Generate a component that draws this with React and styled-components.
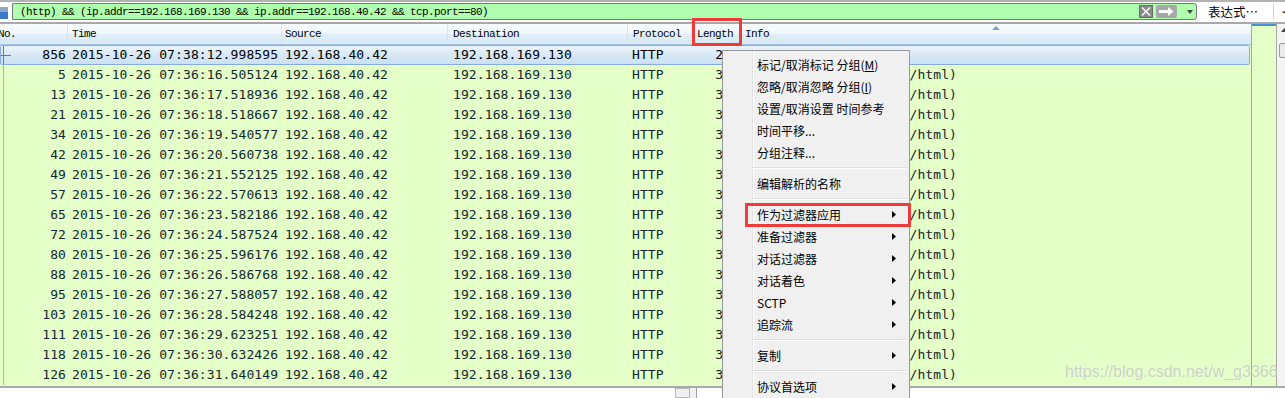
import React from 'react';
import styled, { createGlobalStyle } from 'styled-components';

const Global = createGlobalStyle`
  html, body { margin: 0; padding: 0; background: #fff; }
  body { overflow: hidden; font-family: "Noto Sans CJK SC", "Liberation Sans", sans-serif; }
`;

const COLS = [
  { key: 'no', w: 68, align: 'right', pad: '0 2px 0 0', hpad: '0', indent: -2 },
  { key: 'time', w: 214, align: 'left', pad: '0 0 0 4px', hpad: '0 0 0 4px' },
  { key: 'src', w: 166, align: 'left', pad: '0 0 0 3px', hpad: '0 0 0 3px' },
  { key: 'dst', w: 180, align: 'left', pad: '0 0 0 5px', hpad: '0 0 0 5px' },
  { key: 'proto', w: 64, align: 'left', pad: '0 0 0 4px', hpad: '0 0 0 5px' },
  { key: 'len', w: 49, align: 'right', pad: '0 2px 0 0', hpad: '0 0 0 5px' },
  { key: 'info', w: 0, align: 'left', pad: '0 0 0 2px', hpad: '0 0 0 4px' },
];

const HEAD = { no: 'No.', time: 'Time', src: 'Source', dst: 'Destination', proto: 'Protocol', len: 'Length', info: 'Info' };

const RAW = [
  ['856', '07:38:12.998595', '284'],
  ['5', '07:36:16.505124', '372'],
  ['13', '07:36:17.518936', '372'],
  ['21', '07:36:18.518667', '372'],
  ['34', '07:36:19.540577', '372'],
  ['42', '07:36:20.560738', '372'],
  ['49', '07:36:21.552125', '372'],
  ['57', '07:36:22.570613', '372'],
  ['65', '07:36:23.582186', '372'],
  ['72', '07:36:24.587524', '372'],
  ['80', '07:36:25.596176', '372'],
  ['88', '07:36:26.586768', '372'],
  ['95', '07:36:27.588057', '372'],
  ['103', '07:36:28.584248', '372'],
  ['111', '07:36:29.623251', '372'],
  ['118', '07:36:30.632426', '372'],
  ['126', '07:36:31.640149', '372'],
];

const ROWS = RAW.map(([no, t, len], i) => ({
  no,
  time: `2015-10-26 ${t}`,
  src: '192.168.40.42',
  dst: '192.168.169.130',
  proto: 'HTTP',
  len,
  info: i === 0 ? 'GET / HTTP/1.1' : 'HTTP/1.1 200 OK  (text/html)',
  selected: i === 0,
}));

const MENU = [
  { label: '标记/取消标记 分组(', mn: 'M', tail: ')' },
  { label: '忽略/取消忽略 分组(', mn: 'I', tail: ')' },
  { label: '设置/取消设置 时间参考' },
  { label: '时间平移...' },
  { label: '分组注释...' },
  { sep: true },
  { label: '编辑解析的名称' },
  { sep: true },
  { label: '作为过滤器应用', sub: true },
  { label: '准备过滤器', sub: true },
  { label: '对话过滤器', sub: true },
  { label: '对话着色', sub: true },
  { label: 'SCTP', sub: true },
  { label: '追踪流', sub: true },
  { sep: true },
  { label: '复制', sub: true },
  { sep: true },
  { label: '协议首选项', sub: true },
];

const Frame = styled.div`
  position: relative;
  width: 1285px;
  height: 398px;
  overflow: hidden;
  background: #fff;
  display: flex;
  flex-direction: column;
`;

/* ---------- filter toolbar ---------- */
const FilterBar = styled.div`
  height: 22px;
  flex: 0 0 22px;
  box-sizing: border-box;
  border-top: 2px solid #b2b2b2;
  display: flex;
  align-items: flex-start;
  padding-top: 1px;
  background: #fff;
  & > * { flex-shrink: 0; }
`;

const BookmarkIcon = styled.svg`
  flex: 0 0 9px;
  margin-top: 4px;
`;

const FilterInput = styled.div`
  margin-left: 3px;
  flex: 0 0 1185px;
  width: 1185px;
  height: 17px;
  box-sizing: border-box;
  border: 1px solid #7a7a7a;
  border-radius: 0 3px 3px 0;
  background: #afffaf;
  display: flex;
  align-items: center;
`;

const FilterText = styled.div`
  flex: 1;
  padding-left: 7px;
  font-family: "Liberation Mono", monospace;
  font-size: 11px;
  letter-spacing: -0.6px;
  color: #000;
  white-space: nowrap;
  overflow: hidden;
`;

const ClearButton = styled.div`
  flex: 0 0 14px;
  width: 14px;
  height: 13px;
  background: #8a8a8a;
  border: 1px solid #6d6d6d;
  box-sizing: border-box;
  display: flex;
  align-items: center;
  justify-content: center;
  margin-right: 3px;
`;

const ApplyButton = styled.div`
  flex: 0 0 21px;
  width: 21px;
  height: 13px;
  background: #a8a8a8;
  border-radius: 2px;
  display: flex;
  align-items: center;
  justify-content: center;
  margin-right: 10px;
`;

const Caret = styled.svg`
  flex: 0 0 6px;
  margin-right: 3px;
`;

const ExprLabel = styled.div`
  margin-left: 11px;
  margin-top: 1px;
  font-size: 12.5px;
  line-height: 16px;
  color: #000;
  white-space: nowrap;
`;

const ToolSep = styled.div`
  width: 1px;
  height: 15px;
  margin: 1px 0 0 15px;
  background: #d0d0d0;
`;

const PlusLabel = styled.div`
  margin-left: 8px;
  font-family: "Liberation Sans", sans-serif;
  font-weight: bold;
  font-size: 15px;
  line-height: 17px;
  color: #333;
`;

/* ---------- packet list ---------- */
const Main = styled.div`
  flex: 0 0 364px;
  height: 364px;
  box-sizing: border-box;
  border-top: 2px solid #a9a9a9;
  display: flex;
  background: #e4ffc7;
`;

const List = styled.div`
  width: 1251px;
  flex: 0 0 1251px;
  display: flex;
  flex-direction: column;
  overflow: hidden;
`;

const Header = styled.div`
  height: 21px;
  flex: 0 0 21px;
  box-sizing: border-box;
  display: flex;
  border-bottom: 1px solid #a3c7e3;
  background: linear-gradient(#f8fbfe 0%, #eff7fc 48%, #e1eef8 52%, #d7e9f5 100%);
`;

const HeadCell = styled.div`
  position: relative;
  box-sizing: border-box;
  ${(p) => (p.$w ? `flex: 0 0 ${p.$w}px; width: ${p.$w}px;` : 'flex: 1;')}
  padding: ${(p) => p.$pad};
  text-indent: ${(p) => p.$indent || 0}px;
  border-right: ${(p) => (p.$w ? '1px solid #dbe4ec' : 'none')};
  font-family: "Liberation Mono", monospace;
  font-size: 11px;
  letter-spacing: -0.6px;
  line-height: 21px;
  color: #000;
  white-space: nowrap;
  overflow: hidden;
`;

const SortArrow = styled.svg`
  position: absolute;
  top: 2px;
  left: 50%;
  margin-left: -4px;
`;

const Row = styled.div`
  height: 20px;
  flex: 0 0 20px;
  display: flex;
  align-items: center;
  margin-right: ${(p) => (p.$selected ? 1 : 0)}px;
  border-radius: ${(p) => (p.$selected ? 2 : 0)}px;
  font-family: "DejaVu Sans Mono", monospace;
  font-size: 13px;
  letter-spacing: 0.1px;
  color: ${(p) => (p.$selected ? '#000' : '#12272e')};
  background: ${(p) =>
    p.$selected
      ? 'linear-gradient(#777,#777) 0 10px / 11px 1px no-repeat, linear-gradient(#777,#777) 3px 0 / 1px 20px no-repeat, linear-gradient(#eef5fc, #d6e7f6 55%, #c9dff3)'
      : 'linear-gradient(#b0b0b0,#b0b0b0) 3px 0 / 1px 100% no-repeat, #e4ffc7'};
  box-shadow: ${(p) => (p.$selected ? 'inset 0 0 0 1px #84acdd' : 'none')};
`;

const Cell = styled.div`
  box-sizing: border-box;
  ${(p) => (p.$w ? `flex: 0 0 ${p.$w}px; width: ${p.$w}px;` : 'flex: 1;')}
  padding: ${(p) => p.$pad};
  text-align: ${(p) => p.$align};
  white-space: nowrap;
  overflow: hidden;
  line-height: 20px;
`;

const MiniMap = styled.div`
  flex: 0 0 24px;
  width: 24px;
  border-left: 1px solid #a5a5a5;
  border-right: 1px solid #a5a5a5;
  background: #e4ffc7;
`;

const MapMarker = styled.div`
  height: 2px;
  background: #4a90d9;
`;

const ScrollBar = styled.div`
  flex: 1;
  background: #f4f4f4;
  display: flex;
  flex-direction: column;
  align-items: flex-start;
`;

const ScrollArrow = styled.svg`
  margin: 4px 0 0 4px;
`;

const ScrollThumb = styled.div`
  width: 10px;
  height: 15px;
  margin: 11px 0 0 2px;
  box-sizing: border-box;
  border: 1px solid #9a9a9a;
  border-radius: 2px;
  background: #ebebeb;
`;

/* ---------- bottom panes ---------- */
const Bottom = styled.div`
  flex: 1;
  box-sizing: border-box;
  border-top: 2px solid #a9a9a9;
  display: flex;
  background: #f0f0f0;
  overflow: hidden;
`;

const DetailPane = styled.div`
  flex: 0 0 675px;
  background: #fff;
  overflow: hidden;
  font-family: "DejaVu Sans Mono", monospace;
  font-size: 13px;
  color: #000;
  white-space: nowrap;
  padding: 8px 0 0 40px;
  box-sizing: border-box;
  line-height: 16px;
`;

const ScrollCorner = styled.div`
  flex: 0 0 15px;
  box-sizing: border-box;
  border: 1px solid #b8b8b8;
  background: #f0f0f0;
  margin-right: 6px;
`;

const BytesPane = styled.div`
  flex: 1;
  background: #fff;
  border-left: 1px solid #a0a0a0;
  overflow: hidden;
  font-family: "DejaVu Sans Mono", monospace;
  font-size: 13px;
  color: #000;
  white-space: nowrap;
  padding: 8px 0 0 6px;
  line-height: 16px;
`;

/* ---------- overlays ---------- */
const Watermark = styled.div`
  position: absolute;
  left: 1065px;
  top: 363px;
  font-family: "Liberation Sans", Arial, sans-serif;
  font-size: 16px;
  color: rgba(170, 170, 170, 0.55);
  text-shadow: 0 0 1px rgba(255, 255, 255, 0.8);
  white-space: nowrap;
  pointer-events: none;
`;

const Menu = styled.div`
  position: absolute;
  left: 722px;
  top: 50px;
  width: 188px;
  height: 370px;
  box-sizing: border-box;
  border: 1px solid #979797;
  padding: 2px;
  background: linear-gradient(to right, transparent 29px, #e2e3e3 29px, #e2e3e3 30px, #ffffff 30px, #ffffff 31px, transparent 31px), #f0f0f0;
  display: flex;
  flex-direction: column;
`;

const MenuItem = styled.div`
  height: 22px;
  flex: 0 0 22px;
  display: flex;
  align-items: center;
  justify-content: space-between;
  padding: 0 11px 0 32px;
  font-size: 12px;
  color: #000;
  white-space: nowrap;
`;

const Mnemonic = styled.span`
  text-decoration: underline;
`;

const MenuSep = styled.div`
  height: 9px;
  flex: 0 0 9px;
  display: flex;
  flex-direction: column;
  justify-content: center;
  padding-left: 27px;
`;

const SepLine = styled.div`
  height: 1px;
  background: #e0e0e0;
  border-bottom: 1px solid #ffffff;
`;

const RedBox = styled.div`
  position: absolute;
  left: ${(p) => p.$x}px;
  top: ${(p) => p.$y}px;
  width: ${(p) => p.$w}px;
  height: ${(p) => p.$h}px;
  box-sizing: border-box;
  border: 3px solid #f03b3b;
  pointer-events: none;
`;

const SubArrow = () => (
  <svg width="4" height="7" viewBox="0 0 4 7">
    <polygon points="0,0 4,3.5 0,7" fill="#000" />
  </svg>
);

export default function App() {
  return (
    <Frame>
      <Global />
      <FilterBar>
        <BookmarkIcon width="9" height="13" viewBox="0 0 9 13">
          <rect x="0" y="0" width="8" height="3" fill="#9aa6b4" />
          <rect x="0" y="3" width="8" height="9" fill="#3d78c6" />
          <rect x="0" y="3" width="8" height="2" fill="#7fa9dc" />
        </BookmarkIcon>
        <FilterInput>
          <FilterText>(http) &amp;&amp; (ip.addr==192.168.169.130 &amp;&amp; ip.addr==192.168.40.42 &amp;&amp; tcp.port==80)</FilterText>
          <ClearButton>
            <svg width="10" height="9" viewBox="0 0 10 9">
              <path d="M1 0.5 L9 8.5 M9 0.5 L1 8.5" stroke="#fff" strokeWidth="1.3" />
            </svg>
          </ClearButton>
          <ApplyButton>
            <svg width="15" height="9" viewBox="0 0 15 9">
              <path d="M0 3 H9 V0 L14.5 4.5 L9 9 V6 H0 Z" fill="#fff" />
            </svg>
          </ApplyButton>
          <Caret width="6" height="4" viewBox="0 0 6 4">
            <polygon points="0,0 6,0 3,4" fill="#444" />
          </Caret>
        </FilterInput>
        <ExprLabel>表达式…</ExprLabel>
        <ToolSep />
        <PlusLabel>+</PlusLabel>
      </FilterBar>

      <Main>
        <List>
          <Header>
            {COLS.map((c) => (
              <HeadCell key={c.key} $w={c.w} $pad={c.hpad} $indent={c.indent}>
                {HEAD[c.key]}
                {c.key === 'info' && (
                  <SortArrow width="8" height="4" viewBox="0 0 8 4">
                    <polygon points="0,4 4,0 8,4" fill="#7f9fbd" />
                  </SortArrow>
                )}
              </HeadCell>
            ))}
          </Header>
          {ROWS.map((r) => (
            <Row key={r.no} $selected={r.selected}>
              {COLS.map((c) => (
                <Cell key={c.key} $w={c.w} $pad={c.pad} $align={c.align}>
                  {r[c.key]}
                </Cell>
              ))}
            </Row>
          ))}
        </List>
        <MiniMap>
          <MapMarker />
        </MiniMap>
        <ScrollBar>
          <ScrollArrow width="7" height="4" viewBox="0 0 7 4">
            <polygon points="0,4 3.5,0 7,4" fill="#444" />
          </ScrollArrow>
          <ScrollThumb />
        </ScrollBar>
      </Main>

      <Bottom>
        <DetailPane>[Time since reference or first frame: 1.2]</DetailPane>
        <ScrollCorner />
        <BytesPane>0000  00 50 56 c0 00 08 00 0c 29 a3 1f 5d 08 00 45 00   .PV.....)..]..E.</BytesPane>
      </Bottom>

      <Watermark>https://blog.csdn.net/w_g3366</Watermark>

      <Menu>
        {MENU.map((m, i) =>
          m.sep ? (
            <MenuSep key={i}>
              <SepLine />
            </MenuSep>
          ) : (
            <MenuItem key={i}>
              <span>
                {m.label}
                {m.mn && <Mnemonic>{m.mn}</Mnemonic>}
                {m.tail}
              </span>
              {m.sub && <SubArrow />}
            </MenuItem>
          )
        )}
      </Menu>

      <RedBox $x={692} $y={18} $w={50} $h={28} />
      <RedBox $x={745} $y={203} $w={166} $h={24} />
    </Frame>
  );
}
